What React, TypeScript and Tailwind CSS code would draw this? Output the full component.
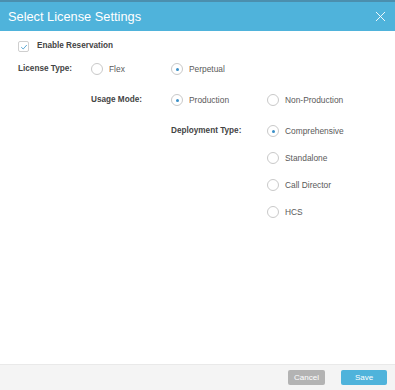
import { X } from "lucide-react";

type RadioProps = { label: string; checked?: boolean; width?: string };

function Radio({ label, checked, width = "" }: RadioProps) {
  return (
    <div className={`flex items-center gap-[6px] ${width}`}>
      <span className="flex h-[12px] w-[12px] items-center justify-center rounded-full border border-[#c9c9c9] bg-white">
        {checked && <span className="h-[3px] w-[3px] rounded-full bg-[#3a8fc7]" />}
      </span>
      <span className="text-[8.4px] text-[#5a5a5a]">{label}</span>
    </div>
  );
}

export default function App() {
  return (
    <div className="flex h-[390px] w-[395px] flex-col bg-white font-['Liberation_Sans',Arial,sans-serif]">
      <header className="flex h-[31px] items-center justify-between border-t-2 border-[#4b8fae] bg-[#4fb3db] pl-[8px] pr-[6px]">
        <h1 className="text-[12.8px] text-white">Select License Settings</h1>
        <X className="h-[17px] w-[17px] text-white" strokeWidth={1.3} />
      </header>

      <main className="flex-1 pt-[10px]">
        <div className="flex h-[11px] items-center gap-[8px] pl-[18px]">
          <span className="flex h-[11px] w-[11px] items-center justify-center rounded-[2px] border border-[#cfcfcf]">
            <svg viewBox="0 0 10 10" className="h-[8px] w-[8px]">
              <path d="M1.5 5.2 L4 7.5 L8.5 2.5" fill="none" stroke="#4a9fd0" strokeWidth="1.1" />
            </svg>
          </span>
          <span className="text-[8.2px] font-bold text-[#444]">Enable Reservation</span>
        </div>

        <div className="mt-[11px] flex h-[12px] items-center pl-[18px]">
          <span className="w-[73px] text-[8.2px] font-bold text-[#444]">License Type:</span>
          <Radio label="Flex" width="w-[80px]" />
          <Radio label="Perpetual" checked />
        </div>

        <div className="mt-[19px] flex h-[12px] items-center pl-[91px]">
          <span className="w-[80px] text-[8.2px] font-bold text-[#444]">Usage Mode:</span>
          <Radio label="Production" checked width="w-[96px]" />
          <Radio label="Non-Production" />
        </div>

        <div className="mt-[19px] flex pl-[171px]">
          <span className="flex h-[12px] w-[96px] items-center text-[8.2px] font-bold text-[#444]">
            Deployment Type:
          </span>
          <div className="flex flex-col gap-[15px]">
            <div className="h-[12px]"><Radio label="Comprehensive" checked /></div>
            <div className="h-[12px]"><Radio label="Standalone" /></div>
            <div className="h-[12px]"><Radio label="Call Director" /></div>
            <div className="h-[12px]"><Radio label="HCS" /></div>
          </div>
        </div>
      </main>

      <footer className="flex h-[26px] items-center justify-end gap-[16px] border-t border-[#e9e9e9] bg-[#f4f4f4] pr-[8px]">
        <button className="h-[15px] w-[37px] rounded-[2px] bg-[#b3b3b3] text-[8px] text-white">Cancel</button>
        <button className="h-[15px] w-[46px] rounded-[2px] bg-[#4fb3db] text-[8px] text-white">Save</button>
      </footer>
    </div>
  );
}
